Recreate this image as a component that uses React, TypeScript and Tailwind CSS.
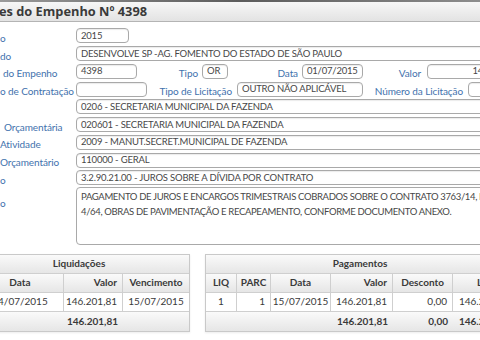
import React from "react";

const inp =
  "h-[15px] border border-[#a9a9a9] rounded-[4px] bg-white px-[4px] flex items-center text-[9.5px] tracking-[-0.2px] text-[#474747] whitespace-nowrap overflow-hidden shrink-0 shadow-[inset_0_1px_1px_rgba(0,0,0,0.08)]";
const lbl = "text-[10px] tracking-[-0.1px] text-[#3f72ad] whitespace-nowrap shrink-0";

function Row({ children }: { children: React.ReactNode }) {
  return <div className="h-[17.75px] flex items-center">{children}</div>;
}

function Label({ text, pl = 0 }: { text: string; pl?: number }) {
  return (
    <div className="w-[76px] shrink-0 overflow-hidden">
      <span className={lbl} style={{ paddingLeft: pl }}>
        {text}
      </span>
    </div>
  );
}

const cell = "border-r border-[#cfcfcf] px-[5px] flex items-center shrink-0 whitespace-nowrap";
const headBg = "bg-gradient-to-b from-[#fafafa] to-[#e6e6e6]";

export default function App() {
  return (
    <div
      className="w-[480px] h-[340px] overflow-hidden bg-white relative"
      style={{ fontFamily: 'Lato, "Open Sans", sans-serif' }}
    >
      <div className="h-[2px] bg-gradient-to-r from-[#9a9a9a] via-[#5c5c5c] to-[#8d8d8d]" />
      <div className="h-[20px] bg-gradient-to-b from-[#f7f7f7] to-[#e3e3e3] border-b border-[#b4b4b4] flex items-center">
        <span
          className="text-[12.8px] font-bold text-[#3a3a3a] whitespace-nowrap -ml-[1px]"
          style={{ fontFamily: '"Open Sans", sans-serif' }}
        >
          es do Empenho Nº 4398
        </span>
      </div>

      <div className="pt-[5px] flex flex-col">
        <Row>
          <Label text="o" />
          <div className={`${inp} w-[53px]`}>2015</div>
        </Row>
        <Row>
          <Label text="do" />
          <div className={`${inp} w-[420px]`}>DESENVOLVE SP -AG. FOMENTO DO ESTADO DE SÃO PAULO</div>
        </Row>
        <Row>
          <Label text="do Empenho" pl={3} />
          <div className={`${inp} w-[61px]`}>4398</div>
          <div className="w-[65px] shrink-0 text-right pr-[4px]">
            <span className={lbl}>Tipo</span>
          </div>
          <div className={`${inp} w-[26px]`}>OR</div>
          <div className="w-[74px] shrink-0 text-right pr-[4px]">
            <span className={lbl}>Data</span>
          </div>
          <div className={`${inp} w-[61px]`}>01/07/2015</div>
          <div className="w-[64px] shrink-0 text-right pr-[6px]">
            <span className={lbl}>Valor</span>
          </div>
          <div className={`${inp} w-[97px] justify-end`}>146.201,81</div>
        </Row>
        <Row>
          <Label text="o de Contratação" />
          <div className={`${inp} w-[71px]`}></div>
          <div className="w-[90px] shrink-0 text-right pr-[5px]">
            <span className={lbl}>Tipo de Licitação</span>
          </div>
          <div className={`${inp} w-[126px]`}>OUTRO NÃO APLICÁVEL</div>
          <div className="w-[105px] shrink-0 text-right pr-[5px]">
            <span className={lbl}>Número da Licitação</span>
          </div>
          <div className={`${inp} w-[60px]`}></div>
        </Row>
        <Row>
          <Label text="" />
          <div className={`${inp} w-[420px]`}>0206 - SECRETARIA MUNICIPAL DA FAZENDA</div>
        </Row>
        <Row>
          <Label text="Orçamentária" pl={4} />
          <div className={`${inp} w-[420px]`}>020601 - SECRETARIA MUNICIPAL DA FAZENDA</div>
        </Row>
        <Row>
          <Label text="Atividade" />
          <div className={`${inp} w-[420px]`}>2009 - MANUT.SECRET.MUNICIPAL DE FAZENDA</div>
        </Row>
        <Row>
          <Label text="Orçamentário" />
          <div className={`${inp} w-[420px]`}>110000 - GERAL</div>
        </Row>
        <Row>
          <Label text="o" />
          <div className={`${inp} w-[420px]`}>3.2.90.21.00 - JUROS SOBRE A DÍVIDA POR CONTRATO</div>
        </Row>
        <div className="flex">
          <div className="w-[76px] shrink-0 overflow-hidden pt-[2px]">
            <span className={lbl}>o</span>
          </div>
          <div className="h-[58px] w-[420px] shrink-0 border border-[#a9a9a9] rounded-[4px] px-[4px] pt-[1px] text-[9.5px] tracking-[-0.35px] leading-[15px] text-[#474747] whitespace-nowrap overflow-hidden">
            <div>PAGAMENTO DE JUROS E ENCARGOS TRIMESTRAIS COBRADOS SOBRE O CONTRATO 3763/14, P</div>
            <div>4/64, OBRAS DE PAVIMENTAÇÃO E RECAPEAMENTO, CONFORME DOCUMENTO ANEXO.</div>
          </div>
        </div>
      </div>

      <div className="flex mt-[9px] gap-[15px] text-[10px] text-[#3a3a3a]">
        <div className="w-[214px] -ml-[24px] shrink-0 border border-[#c9c9c9] shadow-[0_1px_2px_rgba(0,0,0,0.08)]">
          <div className={`h-[19px] ${headBg} border-b border-[#cfcfcf] flex items-center justify-center font-bold pr-[8px]`}>
            Liquidações
          </div>
          <div className={`h-[19px] ${headBg} border-b border-[#cfcfcf] flex font-bold`}>
            <div className={`${cell} w-[87px] justify-center`}>Data</div>
            <div className={`${cell} w-[59px] justify-end`}>Valor</div>
            <div className={`${cell} w-[66px] justify-center border-r-0`}>Vencimento</div>
          </div>
          <div className="h-[19px] bg-white border-b border-[#cfcfcf] flex">
            <div className={`${cell} w-[87px] justify-center`}>14/07/2015</div>
            <div className={`${cell} w-[59px] justify-end`}>146.201,81</div>
            <div className={`${cell} w-[66px] justify-center border-r-0`}>15/07/2015</div>
          </div>
          <div className={`h-[19px] ${headBg} flex font-bold`}>
            <div className="w-[87px] shrink-0" />
            <div className="w-[59px] shrink-0 px-[5px] flex items-center justify-end">146.201,81</div>
          </div>
        </div>

        <div className="w-[310px] shrink-0 border border-[#c9c9c9] shadow-[0_1px_2px_rgba(0,0,0,0.08)]">
          <div className={`h-[19px] ${headBg} border-b border-[#cfcfcf] flex items-center justify-center font-bold`}>
            Pagamentos
          </div>
          <div className={`h-[19px] ${headBg} border-b border-[#cfcfcf] flex font-bold`}>
            <div className={`${cell} w-[31px] justify-center`}>LIQ</div>
            <div className={`${cell} w-[34px] justify-center`}>PARC</div>
            <div className={`${cell} w-[60px] justify-center`}>Data</div>
            <div className={`${cell} w-[62px] justify-end`}>Valor</div>
            <div className={`${cell} w-[60px] justify-center`}>Desconto</div>
            <div className={`${cell} w-[62px] justify-end border-r-0`}>Líquido</div>
          </div>
          <div className="h-[19px] bg-white border-b border-[#cfcfcf] flex">
            <div className={`${cell} w-[31px] justify-center`}>1</div>
            <div className={`${cell} w-[34px] justify-end`}>1</div>
            <div className={`${cell} w-[60px] justify-center`}>15/07/2015</div>
            <div className={`${cell} w-[62px] justify-end`}>146.201,81</div>
            <div className={`${cell} w-[60px] justify-end`}>0,00</div>
            <div className={`${cell} w-[62px] justify-end border-r-0`}>146.201,81</div>
          </div>
          <div className={`h-[19px] ${headBg} flex font-bold`}>
            <div className="w-[125px] shrink-0" />
            <div className="w-[62px] shrink-0 px-[5px] flex items-center justify-end">146.201,81</div>
            <div className="w-[60px] shrink-0 px-[5px] flex items-center justify-end">0,00</div>
            <div className="w-[62px] shrink-0 px-[5px] flex items-center justify-end">146.201,81</div>
          </div>
        </div>
      </div>
    </div>
  );
}
